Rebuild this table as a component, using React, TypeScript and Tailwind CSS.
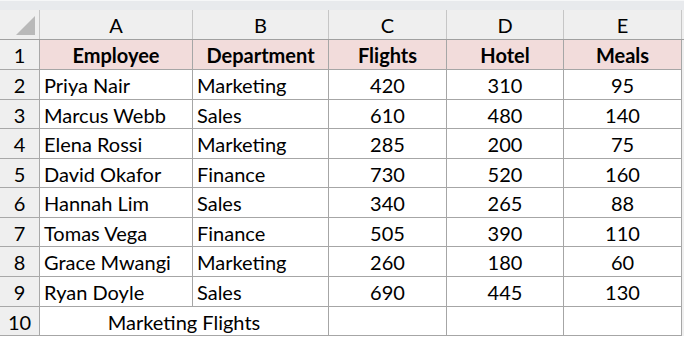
import React from 'react';

const cols = ['A', 'B', 'C', 'D', 'E'];

const rows = [
  ['Priya Nair', 'Marketing', '420', '310', '95'],
  ['Marcus Webb', 'Sales', '610', '480', '140'],
  ['Elena Rossi', 'Marketing', '285', '200', '75'],
  ['David Okafor', 'Finance', '730', '520', '160'],
  ['Hannah Lim', 'Sales', '340', '265', '88'],
  ['Tomas Vega', 'Finance', '505', '390', '110'],
  ['Grace Mwangi', 'Marketing', '260', '180', '60'],
  ['Ryan Doyle', 'Sales', '690', '445', '130'],
];

const heights = ['h-[30px]', 'h-[30px]', 'h-[29px]', 'h-[30px]', 'h-[29px]', 'h-[30px]', 'h-[29px]', 'h-[30px]', 'h-[30px]', 'h-[29px]'];

const grid = 'grid grid-cols-[40px_153px_136px_118px_117px_118px_2px]';

export default function App() {
  return (
    <div className="w-[684px] h-[337px] bg-white overflow-hidden text-[20px] leading-none text-black" style={{ fontFamily: 'Lato, "Open Sans", sans-serif' }}>
      {/* strip under the formula bar */}
      <div className="h-[10px] bg-[#e8eaed] border-t border-[#f6f7f8]" />

      {/* column letters */}
      <div className={`${grid} h-[30px] bg-[#efefef] border-b border-[#a0a0a0]`}>
        <div className="relative border-r border-[#c6c6c6]">
          <div className="absolute right-[4px] bottom-[4px] w-0 h-0 border-l-[19px] border-l-transparent border-b-[19px] border-b-[#b9b9b9]" />
        </div>
        {cols.map((c) => (
          <div key={c} className="flex items-center justify-center border-r border-[#c6c6c6] pt-[1px]">
            {c}
          </div>
        ))}
        <div />
      </div>

      {/* row 1 headers */}
      <div className={`${grid} ${heights[0]}`}>
        <div className="flex items-center justify-center bg-[#efefef] border-r border-b border-[#a8a8a8] pt-[1px]">1</div>
        {['Employee', 'Department', 'Flights', 'Hotel', 'Meals'].map((h) => (
          <div key={h} className="flex items-center justify-center bg-[#f2dcdb] border-r border-b border-[#a6a6a6] font-bold pt-[1px]">
            {h}
          </div>
        ))}
        <div className="bg-[#efefef]" />
      </div>

      {rows.map((r, i) => (
        <div key={i} className={`${grid} ${heights[i + 1]}`}>
          <div className="flex items-center justify-center bg-[#efefef] border-r border-b border-[#a8a8a8] pt-[1px]">{i + 2}</div>
          <div className="flex items-center pl-[4px] border-r border-b border-[#a6a6a6] pt-[1px]">{r[0]}</div>
          <div className="flex items-center pl-[4px] border-r border-b border-[#a6a6a6] pt-[1px]">{r[1]}</div>
          {r.slice(2).map((v, j) => (
            <div key={j} className="flex items-center justify-center border-r border-b border-[#a6a6a6] pt-[1px]">
              {v}
            </div>
          ))}
          <div className="bg-[#efefef]" />
        </div>
      ))}

      {/* row 10: merged A:B */}
      <div className={`${grid} ${heights[9]}`}>
        <div className="flex items-center justify-center bg-[#efefef] border-r border-b border-[#a8a8a8] pt-[1px]">10</div>
        <div className="col-span-2 flex items-center justify-center border-r border-b border-[#a6a6a6] pt-[1px]">Marketing Flights</div>
        <div className="border-r border-b border-[#a6a6a6]" />
        <div className="border-r border-b border-[#a6a6a6]" />
        <div className="border-r border-b border-[#a6a6a6]" />
        <div className="bg-[#efefef]" />
      </div>
    </div>
  );
}
